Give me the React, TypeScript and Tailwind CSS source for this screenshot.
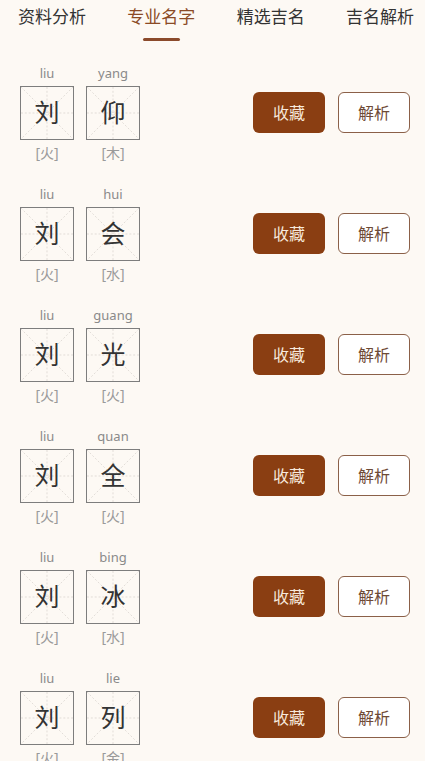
import React from "react";

const tabs = ["资料分析", "专业名字", "精选吉名", "吉名解析"];

const names = [
  { py: "yang", ch: "仰", wx: "木" },
  { py: "hui", ch: "会", wx: "水" },
  { py: "guang", ch: "光", wx: "火" },
  { py: "quan", ch: "全", wx: "火" },
  { py: "bing", ch: "冰", wx: "水" },
  { py: "lie", ch: "列", wx: "金" },
];

function CharBox({ py, ch, wx }: { py: string; ch: string; wx: string }) {
  return (
    <div className="flex flex-col items-center w-[54px]">
      <span className="h-4 leading-4 text-[13px] text-[#8a8a8a]">{py}</span>
      <div className="relative mt-[5px] h-[54px] w-[54px] border-[1.5px] border-[#7d7d7d] flex items-center justify-center">
        <svg className="absolute inset-0 h-full w-full" viewBox="0 0 54 54" preserveAspectRatio="none">
          <g stroke="#d9d4cf" strokeWidth="0.8" strokeDasharray="2 2" fill="none">
            <line x1="0" y1="0" x2="54" y2="54" />
            <line x1="54" y1="0" x2="0" y2="54" />
            <line x1="27" y1="0" x2="27" y2="54" />
            <line x1="0" y1="27" x2="54" y2="27" />
          </g>
        </svg>
        <span className="relative text-[25px] leading-none text-[#333]">{ch}</span>
      </div>
      <span className="mt-[5px] h-4 leading-4 text-[14px] text-[#9a9a9a]">[{wx}]</span>
    </div>
  );
}

export default function App() {
  return (
    <div
      className="min-h-screen bg-[#fdf9f4]"
      style={{ fontFamily: '"Noto Sans", "Noto Sans CJK SC", sans-serif' }}
    >
      {/* tabs */}
      <div className="h-[52px] flex justify-between pl-[18px] pr-[11px]">
        {tabs.map((t, i) => (
          <div key={t} className="relative flex flex-col items-center">
            <span
              className={`mt-[6px] text-[17px] leading-[22px] ${
                i === 1 ? "text-[#8b4a25]" : "text-[#333]"
              }`}
            >
              {t}
            </span>
            {i === 1 && <div className="mt-[10px] h-[3px] w-[37px] rounded-full bg-[#8b4a2b]" />}
          </div>
        ))}
      </div>

      {names.map((n) => (
        <div key={n.ch} className="h-[121px] flex items-center justify-between pl-[20px] pr-[15px]">
          <div className="flex gap-[12px]">
            <CharBox py="liu" ch="刘" wx="火" />
            <CharBox py={n.py} ch={n.ch} wx={n.wx} />
          </div>
          <div className="flex gap-[13px]">
            <button className="h-[41px] w-[72px] rounded-[6px] bg-[#8a3e12] text-[16px] text-[#f7e9dc]">
              收藏
            </button>
            <button className="h-[41px] w-[72px] rounded-[6px] border-[1.5px] border-[#8b6048] bg-white text-[16px] text-[#6e4a36]">
              解析
            </button>
          </div>
        </div>
      ))}
    </div>
  );
}
